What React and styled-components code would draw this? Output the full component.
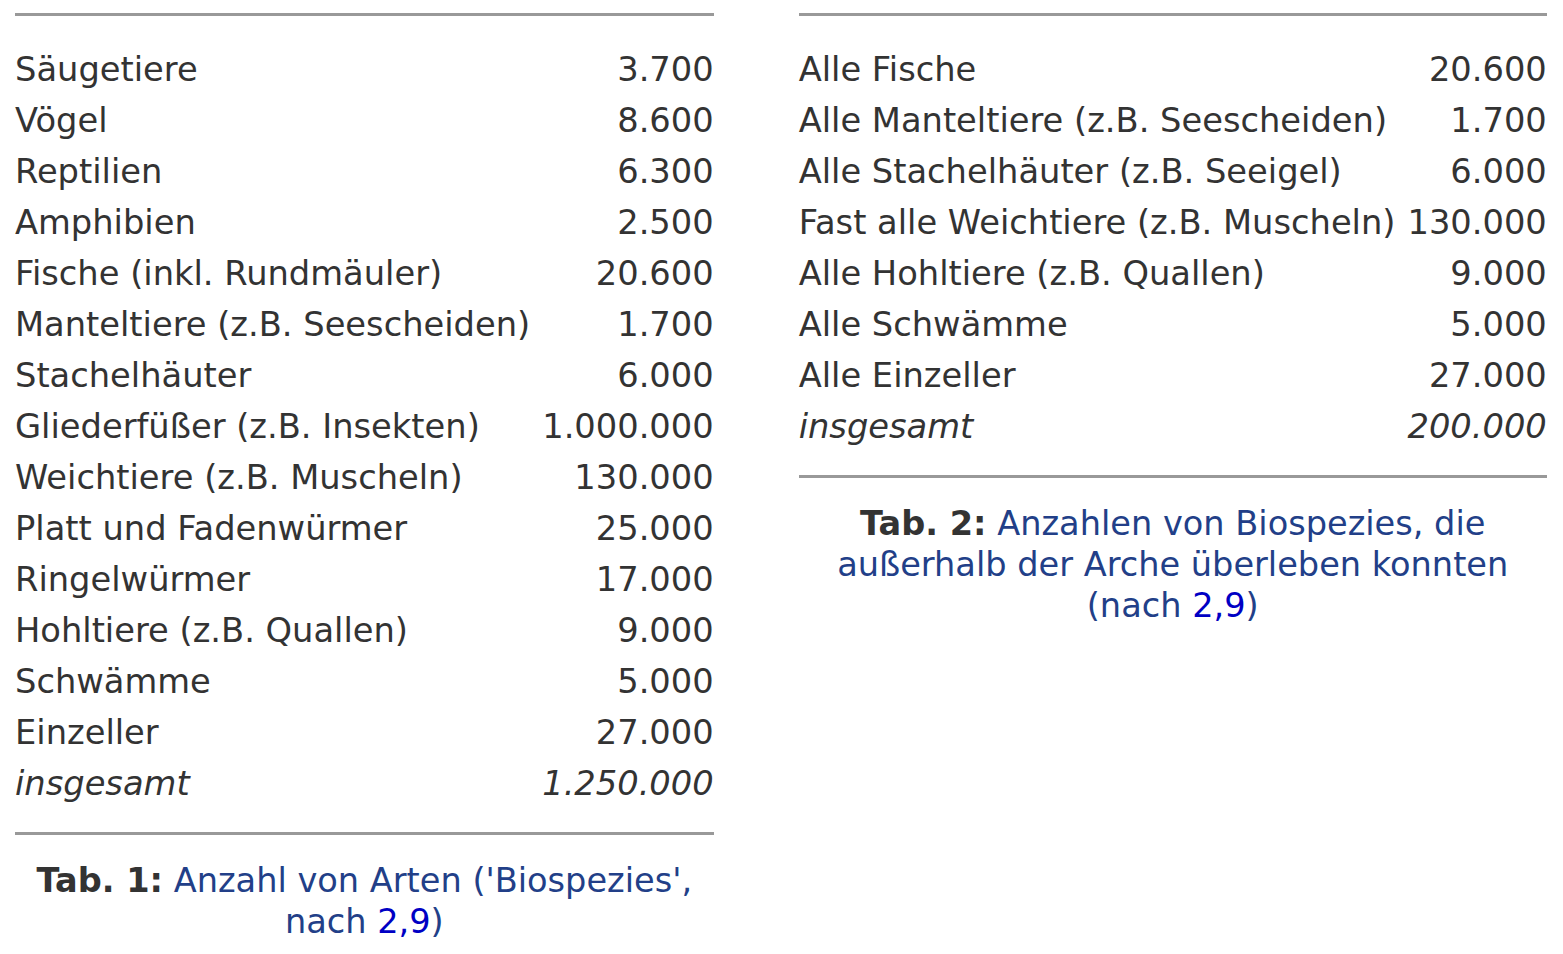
import React from 'react';
import styled, { createGlobalStyle } from 'styled-components';

const GlobalStyle = createGlobalStyle`
  html, body {
    margin: 0;
    padding: 0;
    background: #fff;
  }
  body {
    font-family: "DejaVu Sans", Verdana, sans-serif;
    color: #333;
  }
`;

const Page = styled.div`
  display: flex;
  align-items: flex-start;
  gap: 85px;
  padding: 13px 0 0 15px;
`;

const Table = styled.table`
  border-collapse: separate;
  border-spacing: 0;
  border-top: 3px solid #999;
  border-bottom: 3px solid #999;
  font-size: 33.7px;
  line-height: 51px;
  white-space: nowrap;

  & tbody::before {
    content: '';
    display: table-row;
    height: 28px;
  }
  & tbody::after {
    content: '';
    display: table-row;
    height: 23px;
  }
`;

const Caption = styled.caption`
  caption-side: bottom;
  padding-top: 25px;
  font-size: 33.6px;
  line-height: 41px;
  text-align: center;
  color: #223f88;
  white-space: normal;

  b {
    color: #333;
  }
  a {
    color: #0000c4;
    text-decoration: none;
  }
`;

const Label = styled.td`
  padding: 0;
  text-align: left;
  font-style: ${(p) => (p.$total ? 'italic' : 'normal')};
`;

const Count = styled.td`
  padding: 0 0 0 12px;
  text-align: right;
  font-style: ${(p) => (p.$total ? 'italic' : 'normal')};
`;

const table1 = [
  ['Säugetiere', '3.700'],
  ['Vögel', '8.600'],
  ['Reptilien', '6.300'],
  ['Amphibien', '2.500'],
  ['Fische (inkl. Rundmäuler)', '20.600'],
  ['Manteltiere (z.B. Seescheiden)', '1.700'],
  ['Stachelhäuter', '6.000'],
  ['Gliederfüßer (z.B. Insekten)', '1.000.000'],
  ['Weichtiere (z.B. Muscheln)', '130.000'],
  ['Platt und Fadenwürmer', '25.000'],
  ['Ringelwürmer', '17.000'],
  ['Hohltiere (z.B. Quallen)', '9.000'],
  ['Schwämme', '5.000'],
  ['Einzeller', '27.000'],
];

const table2 = [
  ['Alle Fische', '20.600'],
  ['Alle Manteltiere (z.B. Seescheiden)', '1.700'],
  ['Alle Stachelhäuter (z.B. Seeigel)', '6.000'],
  ['Fast alle Weichtiere (z.B. Muscheln)', '130.000'],
  ['Alle Hohltiere (z.B. Quallen)', '9.000'],
  ['Alle Schwämme', '5.000'],
  ['Alle Einzeller', '27.000'],
];

function SpeciesTable({ rows, total, caption }) {
  return (
    <Table>
      <Caption>{caption}</Caption>
      <tbody>
        {rows.map(([name, count]) => (
          <tr key={name}>
            <Label>{name}</Label>
            <Count>{count}</Count>
          </tr>
        ))}
        <tr>
          <Label $total>insgesamt</Label>
          <Count $total>{total}</Count>
        </tr>
      </tbody>
    </Table>
  );
}

export default function App() {
  return (
    <>
      <GlobalStyle />
      <Page>
        <SpeciesTable
          rows={table1}
          total="1.250.000"
          caption={
            <>
              <b>Tab. 1:</b> Anzahl von Arten ('Biospezies', nach <a href="#">2,9</a>)
            </>
          }
        />
        <SpeciesTable
          rows={table2}
          total="200.000"
          caption={
            <>
              <b>Tab. 2:</b> Anzahlen von Biospezies, die außerhalb der Arche überleben konnten (nach{' '}
              <a href="#">2,9</a>)
            </>
          }
        />
      </Page>
    </>
  );
}
